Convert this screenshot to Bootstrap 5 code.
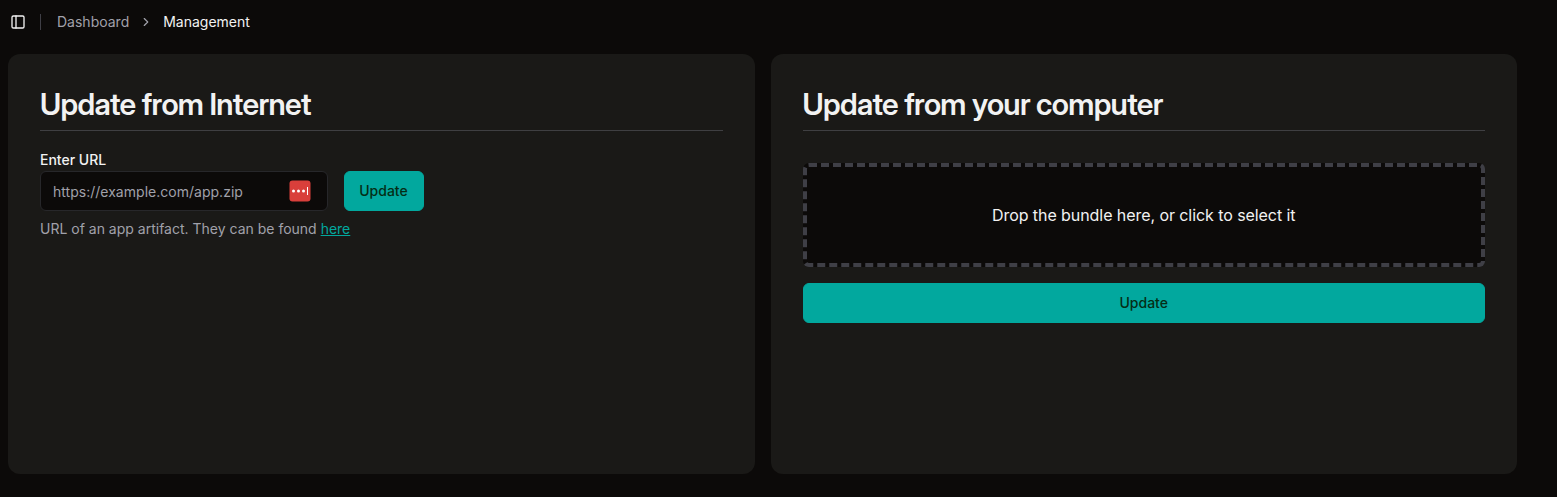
<!DOCTYPE html>
<html lang="en" data-bs-theme="dark">
<head>
<meta charset="utf-8">
<meta name="viewport" content="width=device-width, initial-scale=1">
<title>Management</title>
<link href="https://cdn.jsdelivr.net/npm/bootstrap@5.3.0/dist/css/bootstrap.min.css" rel="stylesheet">
<style>
  body { background: #0c0a09; color: #f2f2f2; font-family: Inter, sans-serif; font-size: 14px; line-height: 20px; height: 497px; overflow: hidden; }
  .topbar { height: 44px; padding-left: 10px; }
  .topbar svg, .token svg { display: block; }
  .divider { width: 1px; height: 16px; background: #3f3f46; margin: 0 16px 0 14px; }
  .muted { color: #a1a1aa; }
  .crumbs { gap: 10px; }
  .panels { display: grid; grid-template-columns: 1fr 1fr; gap: 16px; margin: 10px 40px 0 8px; height: 420px; }
  .panel { background: #1a1917; border-radius: 12px; padding: 32px; }
  .panel h2 { font-family: "Inter Display", Inter, sans-serif; font-size: 30px; line-height: 36px; font-weight: 600; letter-spacing: -.64px; padding-bottom: 8px; border-bottom: 1px solid #3f3f42; margin: 0; color: #f2f2f2; }
  .url-label { line-height: 14px; font-weight: 500; margin: 22px 0 4px; display: block; }
  .url-box { width: 288px; height: 40px; }
  .url-box .form-control { height: 40px; font-size: 14px; line-height: 20px; letter-spacing: .02px; padding: 8px 12px; background: #0c0a09; border: 1px solid #27272a; border-radius: 6px; }
  .url-box .form-control::placeholder { color: #a1a1aa; }
  .token { right: 17px; top: 9px; }
  .btn-teal { --bs-btn-bg: #02a89e; --bs-btn-color: #052e16; --bs-btn-border-color: #02a89e; --bs-btn-hover-bg: #02968d; --bs-btn-hover-color: #052e16; height: 40px; padding: 0 15px; font-size: 14px; line-height: 20px; font-weight: 500; border-radius: 6px; }
  .btn-fixed { width: 80px; padding: 0 15px 0 14px; }
  .here-link { color: #02a89e; }
  .dropzone { height: 104px; margin-top: 32px; border: 4px dashed #3f3f46; border-radius: 6px; background: #0c0a09; font-size: 16px; line-height: 24px; letter-spacing: -.07px; cursor: pointer; }
</style>
</head>
<body>
<header class="topbar d-flex align-items-center">
  <svg width="16" height="16" viewBox="0 0 24 24" fill="none" stroke="#f2f2f2" stroke-width="2" stroke-linecap="round" stroke-linejoin="round"><rect width="18" height="18" x="3" y="3" rx="2"/><path d="M9 3v18"/></svg>
  <div class="divider"></div>
  <nav class="crumbs d-flex align-items-center" aria-label="Breadcrumb">
    <span class="muted">Dashboard</span>
    <svg width="14" height="14" viewBox="0 0 24 24" fill="none" stroke="#a1a1aa" stroke-width="2" stroke-linecap="round" stroke-linejoin="round"><path d="m9 18 6-6-6-6"/></svg>
    <span>Management</span>
  </nav>
</header>
<main class="panels">
  <section class="panel">
    <h2>Update from Internet</h2>
    <label class="url-label" for="url">Enter URL</label>
    <div class="d-flex gap-3">
      <div class="url-box position-relative">
        <input id="url" class="form-control" placeholder="https://example.com/app.zip">
        <span class="token position-absolute">
          <svg width="22" height="22" viewBox="0 0 22 22"><rect x=".5" y=".5" width="21" height="21" rx="3" fill="#d93f3b"/><g fill="#fff"><circle cx="4.5" cy="11" r="1.5"/><circle cx="9.5" cy="11" r="1.5"/><circle cx="14.5" cy="11" r="1.5"/><rect x="18" y="7" width="1" height="8"/></g></svg>
        </span>
      </div>
      <button class="btn btn-teal btn-fixed" type="button">Update</button>
    </div>
    <p class="muted mt-2 mb-0">URL of an app artifact. They can be found <a class="here-link" href="#">here</a></p>
  </section>
  <section class="panel">
    <h2>Update from your computer</h2>
    <div class="dropzone d-flex align-items-center justify-content-center">Drop the bundle here, or click to select it</div>
    <button class="btn btn-teal w-100 mt-3" type="button">Update</button>
  </section>
</main>
<script src="https://cdn.jsdelivr.net/npm/bootstrap@5.3.0/dist/js/bootstrap.bundle.min.js"></script>
</body>
</html>
